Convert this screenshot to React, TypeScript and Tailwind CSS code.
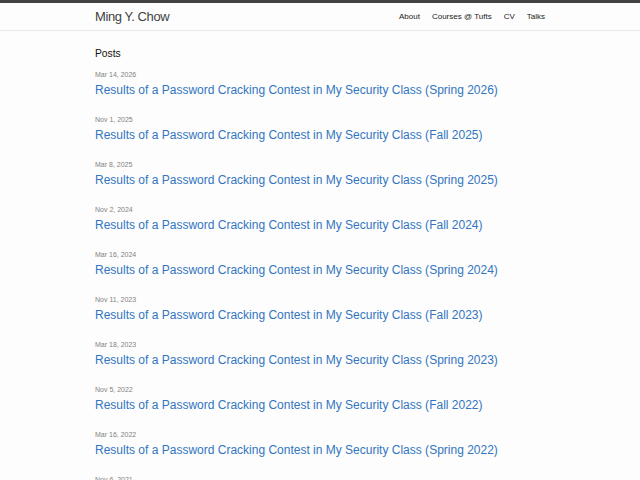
const posts = [
  { date: "Mar 14, 2026", title: "Spring 2026" },
  { date: "Nov 1, 2025", title: "Fall 2025" },
  { date: "Mar 8, 2025", title: "Spring 2025" },
  { date: "Nov 2, 2024", title: "Fall 2024" },
  { date: "Mar 16, 2024", title: "Spring 2024" },
  { date: "Nov 11, 2023", title: "Fall 2023" },
  { date: "Mar 18, 2023", title: "Spring 2023" },
  { date: "Nov 5, 2022", title: "Fall 2022" },
  { date: "Mar 16, 2022", title: "Spring 2022" },
  { date: "Nov 6, 2021", title: "Fall 2021" },
  { date: "Mar 20, 2021", title: "Spring 2021" },
];

export default function App() {
  return (
    <div className="min-h-screen bg-[#fdfdfd] text-[#111] font-['Liberation_Sans',Arial,sans-serif]">
      {/* ─── HEADER ─── */}
      <header className="border-t-[3px] border-[#424242] border-b border-b-[#e8e8e8]">
        <div className="w-[450px] mx-auto h-[27px] flex items-center justify-between">
          <a className="text-[13px] tracking-[-0.4px] text-[#424242]">Ming Y. Chow</a>
          <nav className="flex gap-3 text-[8px] text-[#222]">
            <a>About</a>
            <a>Courses @ Tufts</a>
            <a>CV</a>
            <a>Talks</a>
          </nav>
        </div>
      </header>

      {/* ─── POSTS ─── */}
      <main className="w-[450px] mx-auto pt-[16px]">
        <h2 className="text-[10.3px] leading-[14px] mb-[9px]">Posts</h2>
        <ul>
          {posts.map((p) => (
            <li key={p.date} className="mb-[15px]">
              <div className="text-[7px] leading-[10px] text-[#828282]">{p.date}</div>
              <a className="block text-[12px] leading-[20px] text-[#3275c0]">
                Results of a Password Cracking Contest in My Security Class ({p.title})
              </a>
            </li>
          ))}
        </ul>
      </main>
    </div>
  );
}
